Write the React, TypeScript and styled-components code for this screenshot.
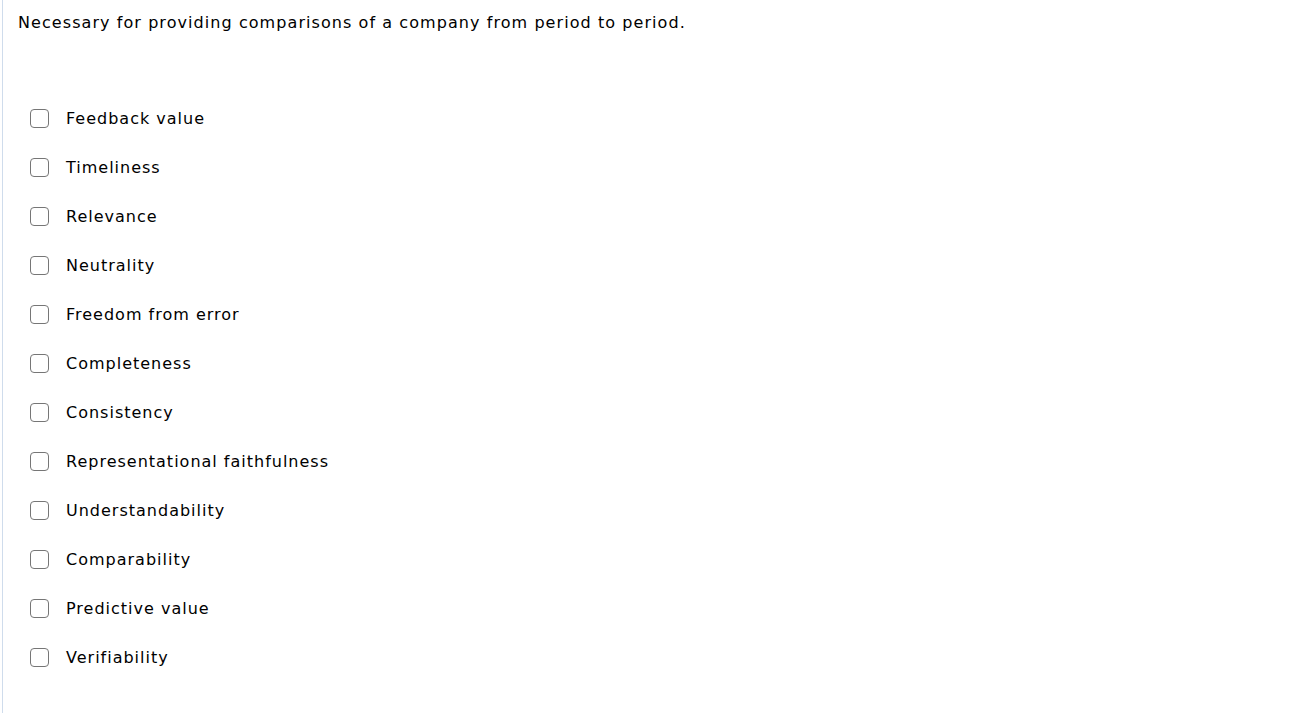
import React from "react";
import styled, { createGlobalStyle } from "styled-components";

const Global = createGlobalStyle`
  html, body { margin: 0; padding: 0; background: #fff; }
  body { font-family: Verdana, "DejaVu Sans", sans-serif; color: #000; }
`;

const Page = styled.div`
  height: 713px;
  box-sizing: border-box;
  margin-left: 2px;
  border-left: 1px solid #cfdcec;
  padding: 11px 0 0 15px;
`;

const Prompt = styled.p`
  margin: 0;
  font-size: 16px;
  letter-spacing: 1.07px;
  line-height: 24px;
`;

const List = styled.ul`
  list-style: none;
  margin: 71px 0 0 0;
  padding: 0 0 0 12px;
  display: flex;
  flex-direction: column;
  gap: 25px;
`;

const Row = styled.li`
  display: flex;
  align-items: center;
  height: 24px;
  font-size: 16px;
  letter-spacing: 1px;
`;

const Box = styled.span`
  border: 1px solid #767676;
  border-radius: 4px;
  box-sizing: border-box;
  width: 19px;
  height: 19px;
  margin-right: 17px;
  flex: none;
`;

const items = [
  "Feedback value",
  "Timeliness",
  "Relevance",
  "Neutrality",
  "Freedom from error",
  "Completeness",
  "Consistency",
  "Representational faithfulness",
  "Understandability",
  "Comparability",
  "Predictive value",
  "Verifiability",
];

export default function App() {
  return (
    <>
      <Global />
      <Page>
        <Prompt>Necessary for providing comparisons of a company from period to period.</Prompt>
        <List>
          {items.map((t) => (
            <Row key={t}>
              <Box />
              {t}
            </Row>
          ))}
        </List>
      </Page>
    </>
  );
}
